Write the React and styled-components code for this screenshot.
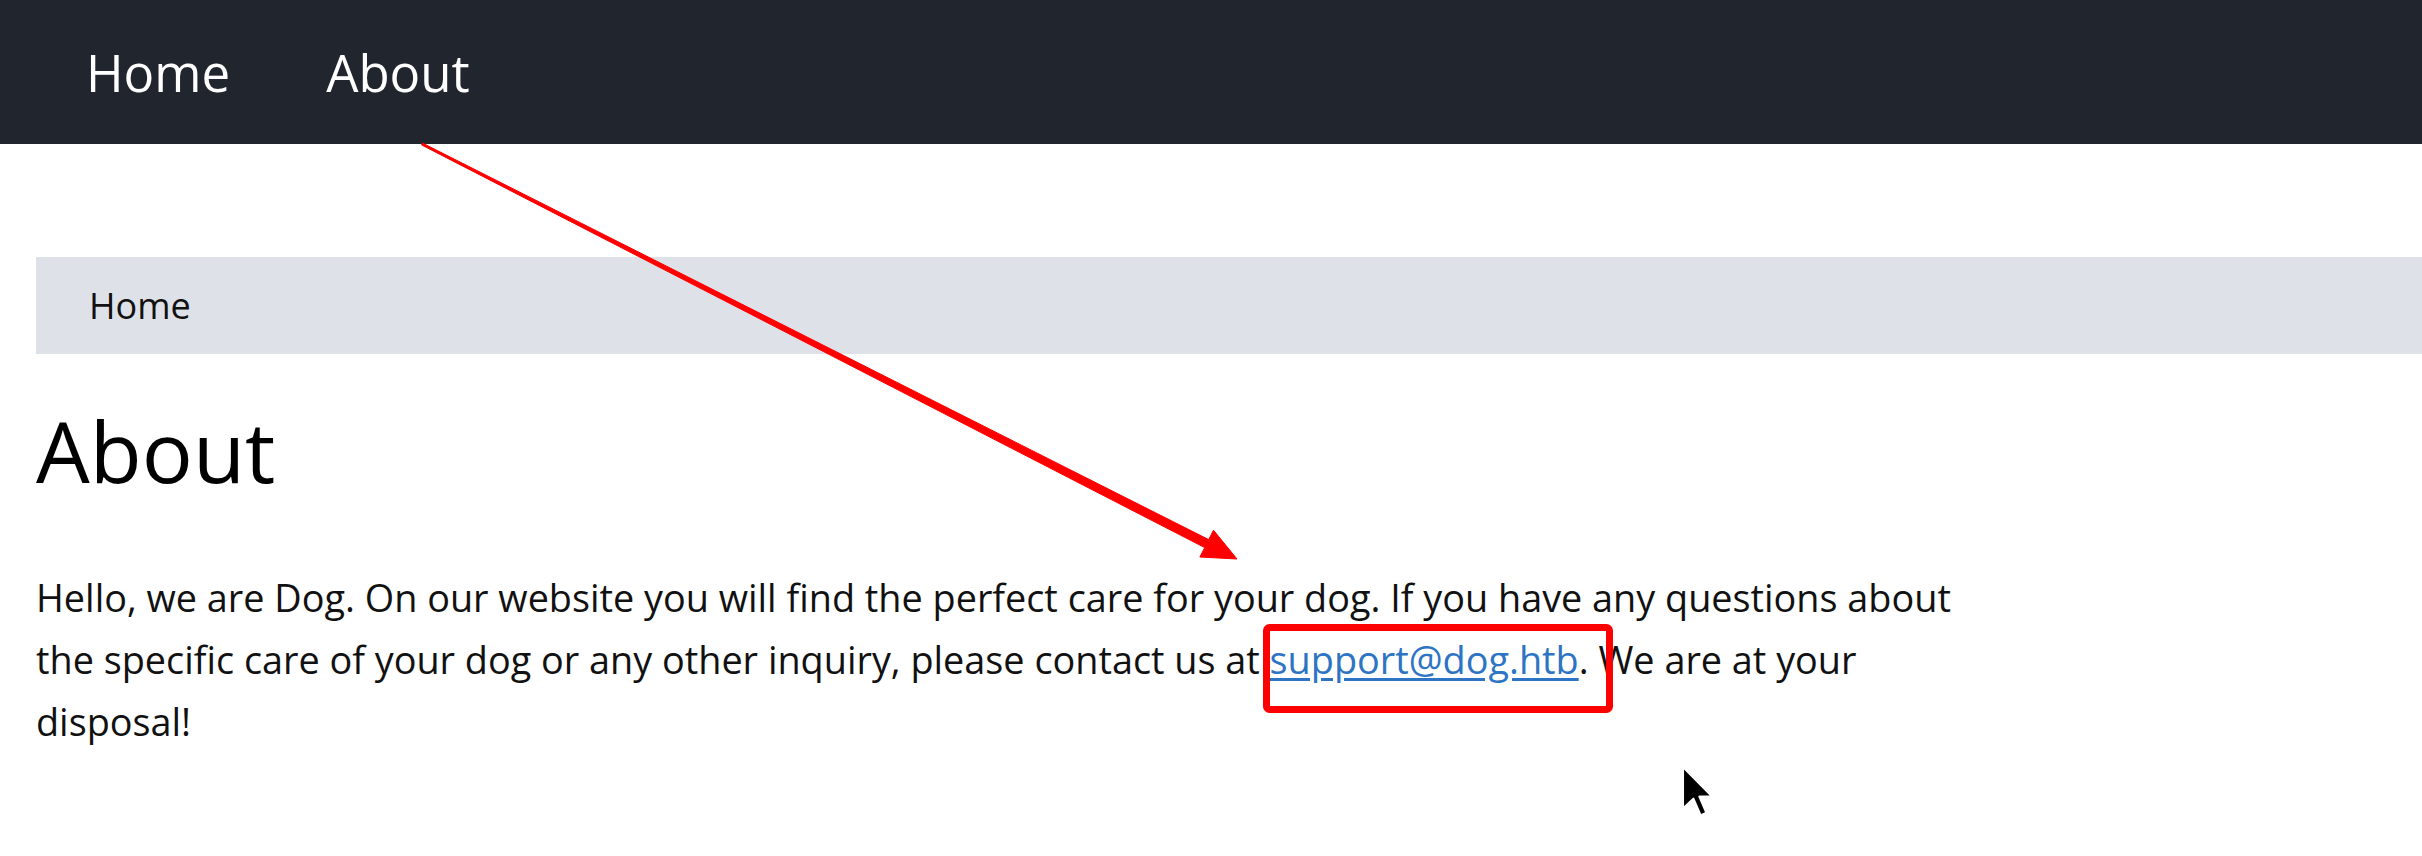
import React from "react";
import styled, { createGlobalStyle } from "styled-components";

const Global = createGlobalStyle`
  html, body { margin: 0; padding: 0; background: #fff; }
  body { font-family: "Open Sans", "Noto Sans", sans-serif; color: #111; overflow: hidden; }
`;

const Page = styled.div`
  position: relative;
  width: 2422px;
  height: 856px;
  overflow: hidden;
`;

const NavBar = styled.nav`
  height: 144px;
  background: #21252e;
  display: flex;
  align-items: center;
  padding-left: 86px;
  gap: 96px;
`;

const NavLink = styled.a`
  color: #fff;
  font-size: 51px;
  font-weight: 400;
  text-decoration: none;
  line-height: 1;
`;

const Main = styled.main`
  padding: 113px 0 0 36px;
`;

const Breadcrumb = styled.div`
  height: 97px;
  background: #dfe1e8;
  display: flex;
  align-items: center;
  padding-left: 53px;
  font-size: 36px;
  color: #111;
`;

const Title = styled.h1`
  margin: 45px 0 0;
  font-size: 85px;
  font-weight: 400;
  line-height: 102px;
  color: #000;
`;

const Text = styled.p`
  margin: 66px 0 0;
  max-width: 1970px;
  font-size: 37.8px;
  line-height: 62px;
  color: #111;
`;

const Link = styled.a`
  color: #2d74c4;
  text-decoration: underline;
  text-underline-offset: 4px;
`;

const Overlay = styled.svg`
  position: absolute;
  left: 0;
  top: 0;
  pointer-events: none;
`;

export default function App() {
  return (
    <Page>
      <Global />
      <NavBar>
        <NavLink href="#">Home</NavLink>
        <NavLink href="#">About</NavLink>
      </NavBar>
      <Main>
        <Breadcrumb>Home</Breadcrumb>
        <Title>About</Title>
        <Text>
          Hello, we are Dog. On our website you will find the perfect care for your dog. If you have any questions about
          the specific care of your dog or any other inquiry, please contact us at{" "}
          <Link href="#">support@dog.htb</Link>. We are at your disposal!
        </Text>
      </Main>
      <Overlay width="2422" height="856" viewBox="0 0 2422 856">
        <polygon
          fill="#f00"
          strokeLinejoin="round"
          stroke="#f00"
          strokeWidth="1"
          points="422.5,143.1 1208.7,539.6 1213.5,530.2 1237,559 1199.9,557.0 1204.7,547.6 421.5,144.9"
        />
        <rect x="1266.5" y="627.5" width="343" height="82" rx="3" fill="none" stroke="#f00" strokeWidth="7" />
        <g transform="translate(1683,767) scale(2.6)">
          <path d="M0 0 L0 16 L4 12.2 L6.8 18.6 L9 17.6 L6.3 11.4 L11.2 11.4 Z" fill="#000" stroke="#fff" strokeWidth="0.8" strokeLinejoin="round" />
        </g>
      </Overlay>
    </Page>
  );
}
